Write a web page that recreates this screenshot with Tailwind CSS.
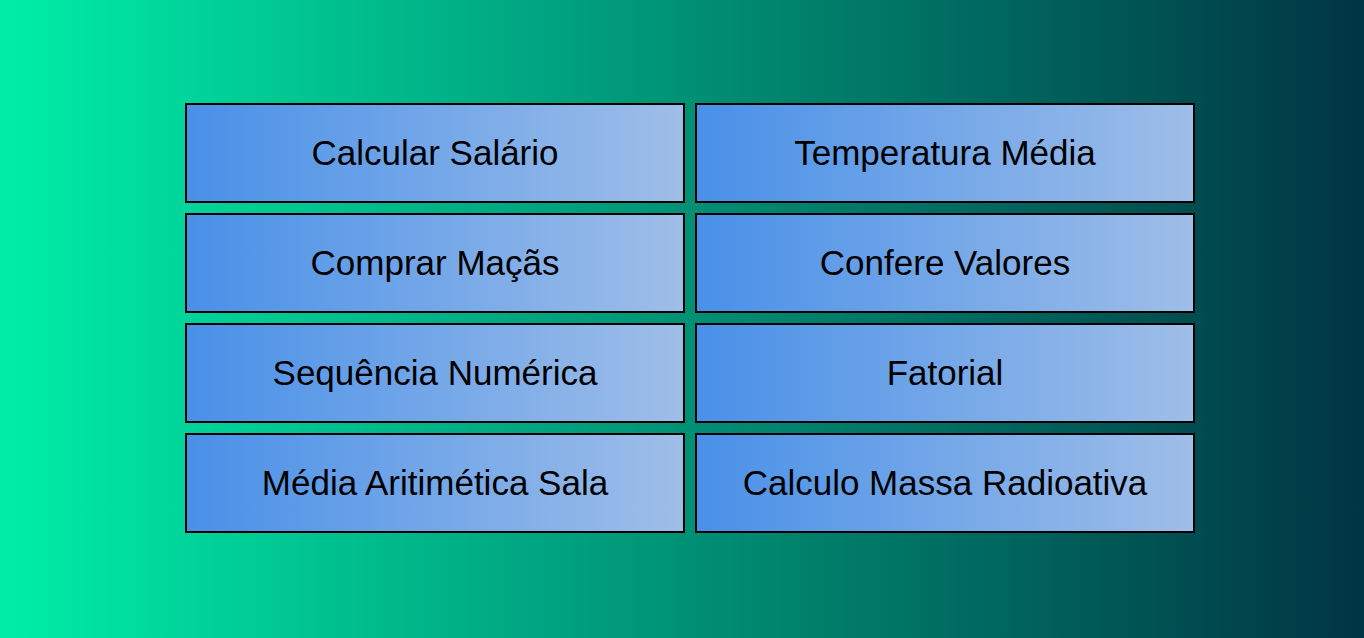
<!DOCTYPE html>
<html lang="pt-BR">
<head>
<meta charset="utf-8">
<meta name="viewport" content="width=device-width, initial-scale=1">
<title>Exercícios</title>
<script src="https://cdn.jsdelivr.net/npm/@tailwindcss/browser@4"></script>
</head>
<body class="flex min-h-screen items-center justify-center bg-linear-[to_right,#00eea8,#003543] pb-[2px] pl-4 font-['Liberation_Sans',Arial,sans-serif]">
<main class="grid w-full max-w-[1010px] grid-cols-2 gap-[10px] text-[35px] text-black">
<button class="min-h-[100px] border-2 border-black bg-linear-[to_right,#4990e8,#9fbee8]">Calcular Salário</button>
<button class="min-h-[100px] border-2 border-black bg-linear-[to_right,#4990e8,#9fbee8]">Temperatura Média</button>
<button class="min-h-[100px] border-2 border-black bg-linear-[to_right,#4990e8,#9fbee8]">Comprar Maçãs</button>
<button class="min-h-[100px] border-2 border-black bg-linear-[to_right,#4990e8,#9fbee8]">Confere Valores</button>
<button class="min-h-[100px] border-2 border-black bg-linear-[to_right,#4990e8,#9fbee8]">Sequência Numérica</button>
<button class="min-h-[100px] border-2 border-black bg-linear-[to_right,#4990e8,#9fbee8]">Fatorial</button>
<button class="min-h-[100px] border-2 border-black bg-linear-[to_right,#4990e8,#9fbee8]">Média Aritimética Sala</button>
<button class="min-h-[100px] border-2 border-black bg-linear-[to_right,#4990e8,#9fbee8]">Calculo Massa Radioativa</button>
</main>
</body>
</html>
